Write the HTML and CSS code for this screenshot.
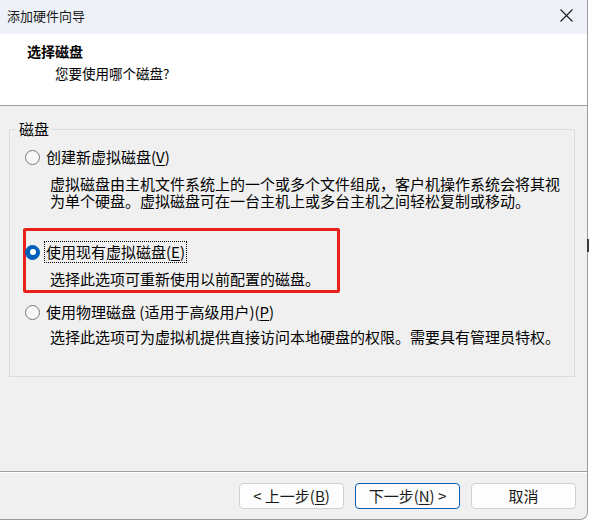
FILE: index.html
```html
<!DOCTYPE html>
<html lang="zh-CN">
<head>
<meta charset="utf-8">
<title>添加硬件向导</title>
<link rel="stylesheet" href="styles.css">
</head>
<body>
<div class="window">
  <div class="titlebar">
    <span class="title">添加硬件向导</span>
    <svg class="close" width="13" height="13" viewBox="0 0 13 13" aria-hidden="true">
      <path d="M0.5 0.5 L12.5 12.5 M12.5 0.5 L0.5 12.5" stroke="#1a1a1a" stroke-width="1.1" fill="none"/>
    </svg>
  </div>
  <div class="header">
    <div class="h-title">选择磁盘</div>
    <div class="h-sub">您要使用哪个磁盘?</div>
  </div>
  <div class="content">
    <fieldset class="group">
      <legend class="group-label">磁盘</legend>
      <div class="option opt1">
        <div class="radio-row">
          <span class="radio"></span>
          <span class="label">创建新虚拟磁盘(<u>V</u>)</span>
        </div>
        <div class="desc">虚拟磁盘由主机文件系统上的一个或多个文件组成，客户机操作系统会将其视<br>为单个硬盘。虚拟磁盘可在一台主机上或多台主机之间轻松复制或移动。</div>
      </div>
      <div class="option opt2">
        <span class="highlight"></span>
        <div class="radio-row">
          <span class="radio checked"></span>
          <span class="label focused">使用现有虚拟磁盘(<u>E</u>)</span>
        </div>
        <div class="desc">选择此选项可重新使用以前配置的磁盘。</div>
      </div>
      <div class="option opt3">
        <div class="radio-row">
          <span class="radio"></span>
          <span class="label">使用物理磁盘 (适用于高级用户)(<u>P</u>)</span>
        </div>
        <div class="desc">选择此选项可为虚拟机提供直接访问本地硬盘的权限。需要具有管理员特权。</div>
      </div>
    </fieldset>
  </div>
  <div class="footer">
    <button class="btn">&lt; 上一步(<u>B</u>)</button>
    <button class="btn default">下一步(<u>N</u>) &gt;</button>
    <button class="btn">取消</button>
  </div>
</div>
<span class="edge-mark"></span>
</body>
</html>
```
FILE: styles.css
```css
html, body {
  margin: 0;
  padding: 0;
  background: #ffffff;
}
body {
  width: 589px;
  height: 520px;
  overflow: hidden;
  position: relative;
  font-family: "Noto Sans CJK SC", "Noto Sans", sans-serif;
  color: #000;
}
.window {
  width: 587px;
  height: 519px;
  background: #f0f0f0;
  border-right: 1px solid #9c9c9c;
  border-bottom: 1px solid #9c9c9c;
  border-bottom-right-radius: 8px;
  display: flex;
  flex-direction: column;
  overflow: hidden;
}
.titlebar {
  height: 34px;
  flex: none;
  background: #eef2f8;
  display: flex;
  align-items: center;
  justify-content: space-between;
  padding: 0 14px 0 7px;
  box-sizing: border-box;
}
.title {
  font-size: 13px;
  line-height: 18px;
  color: #1a1a1a;
  margin-top: -2px;
}
.close {
  display: block;
  margin-top: -3px;
}
.header {
  height: 72px;
  flex: none;
  background: #ffffff;
  border-bottom: 1px solid #a0a0a0;
  box-sizing: border-box;
  padding: 7px 0 0 27px;
}
.h-title {
  font-size: 14px;
  font-weight: bold;
  line-height: 20px;
}
.h-sub {
  font-size: 13.5px;
  line-height: 20px;
  margin: 2px 0 0 28px;
}
.content {
  flex: 1;
  padding: 13px 12px 0 9px;
  border-bottom: 1px solid #a0a0a0;
  box-shadow: 0 1px 0 #ffffff;
}
.group {
  margin: 0;
  padding: 8px 0 31px 0;
  border: 1px solid #dcdcdc;
  font-size: 15px;
  min-width: 0;
}
.group-label {
  margin-left: 6px;
  padding: 0 3px;
  font-size: 15px;
  line-height: 20px;
}
.option {
  position: relative;
  display: flex;
  flex-direction: column;
}
.opt2 { margin-top: 33px; }
.opt3 { margin-top: 15px; }
.radio-row {
  display: flex;
  align-items: center;
  height: 20px;
  padding-left: 15px;
  gap: 6px;
}
.radio {
  width: 15px;
  height: 15px;
  box-sizing: border-box;
  border-radius: 50%;
  border: 1px solid #7a7a7a;
  background: #f7f7f7;
  flex: none;
  position: relative;
}
.radio.checked {
  background: #005fb8;
  border-color: #005fb8;
}
.radio.checked::after {
  content: "";
  position: absolute;
  left: 3.5px;
  top: 3.5px;
  width: 6px;
  height: 6px;
  border-radius: 50%;
  background: #ffffff;
}
.label {
  font-size: 15px;
  line-height: 20px;
  white-space: nowrap;
}
.label u, .btn u {
  text-underline-offset: 2px;
}
.label.focused {
  display: inline-block;
  padding: 0 1px;
  margin-left: -1px;
  outline: 1px dotted #000;
}
.desc {
  margin: 8px 0 0 40px;
  font-size: 15px;
  line-height: 17px;
  white-space: nowrap;
}
.opt3 .desc { margin-top: 6px; }
.highlight {
  position: absolute;
  left: 13px;
  top: -14px;
  width: 317px;
  height: 65px;
  box-sizing: border-box;
  border: 3px solid #e8221b;
  border-radius: 2px;
  pointer-events: none;
}
.footer {
  height: 47px;
  flex: none;
  display: flex;
  justify-content: flex-end;
  align-items: flex-start;
  gap: 11px;
  padding: 11px 11px 0 0;
  box-sizing: border-box;
}
.btn {
  width: 105px;
  height: 26px;
  box-sizing: border-box;
  border: 1px solid #d0d0d0;
  border-radius: 4px;
  background: #fdfdfd;
  font-family: "Noto Sans CJK SC", "Noto Sans", sans-serif;
  font-size: 15px;
  line-height: 22px;
  color: #1a1a1a;
  padding: 0;
}
.btn.default {
  border-color: #005fb8;
}
.edge-mark {
  position: absolute;
  left: 587px;
  top: 239px;
  width: 2px;
  height: 13px;
  background: #3a3a3a;
}
```
